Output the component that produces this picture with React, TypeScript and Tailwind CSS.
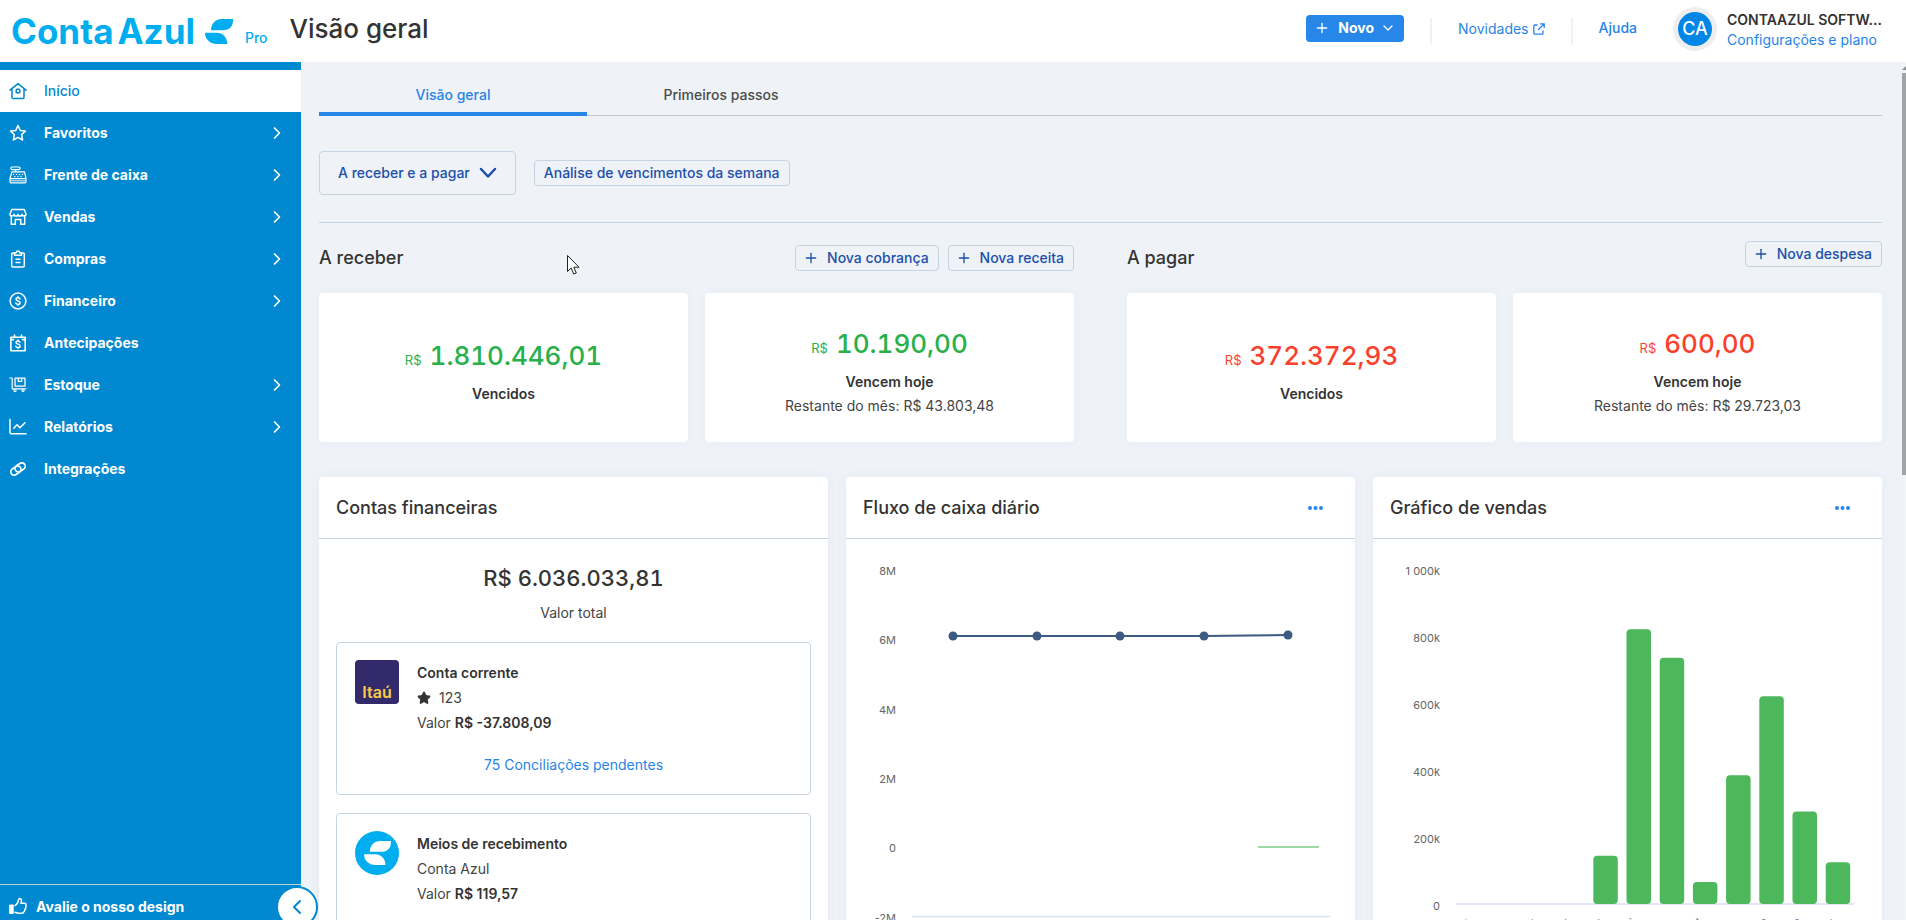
import React, { useState } from 'react';
import { ChevronDown, ChevronLeft, ChevronRight, Plus, Star } from 'lucide-react';

const Svg: React.FC<{ children: React.ReactNode; className?: string }> = ({ children, className = 'size-[18px]' }) => (
  <svg viewBox="0 0 18 18" fill="none" stroke="currentColor" strokeWidth="1.5" strokeLinecap="round" strokeLinejoin="round" className={className} aria-hidden="true">
    {children}
  </svg>
);

const HomeIcon: React.FC = () => (
  <Svg>
    <path d="M1 8.2 9 1.6l8 6.6M3 7v8.4c0 .6.4 1 1 1h10c.6 0 1-.4 1-1V7" />
    <rect x="7.2" y="7.2" width="3.6" height="3.6" rx="0.8" />
  </Svg>
);

const StarIcon: React.FC = () => (
  <Svg>
    <path d="m9 1.5 2.2 4.9 5.3.6-3.9 3.6 1 5.4L9 13.3 4.4 16l1-5.4L1.5 7l5.3-.6z" />
  </Svg>
);

const RegisterIcon: React.FC = () => (
  <Svg>
    <rect x="2" y="1" width="9" height="2.6" rx="1" strokeWidth="1.2" />
    <path d="M6.5 3.8v2" strokeWidth="1.2" />
    <path d="M3 5.8h12.5l1.5 6.5v3.5c0 .6-.4 1-1 1H2c-.6 0-1-.4-1-1v-3.5zM1.2 12.6h15.6" strokeWidth="1.2" />
    <path d="M2 14.8h14" strokeWidth="1.4" opacity="0.6" />
    <path d="M4.500 8.400h.1M7.500 8.400h.1M10.500 8.400h.1M13.500 8.400h.1M5.800 10.500h.1M8.900 10.500h.1M12 10.500h.1" strokeWidth="1.3" />
  </Svg>
);

const StoreIcon: React.FC = () => (
  <Svg>
    <path d="M2.8 1.5h12.4L17 6c0 1.100-.8 1.900-2 1.900S13 7 13 6.200C13 7.100 12.200 8 11 8S9 7.100 9 6.200C9 7.100 8.200 8 7 8S5 7.100 5 6.200C5 7 4.200 7.900 3 7.900S1 7.100 1 6z" />
    <path d="M2.3 8v8.3h4v-4.8h5.4v4.8h4V8" />
  </Svg>
);

const ClipboardIcon: React.FC = () => (
  <Svg>
    <path d="M5.5 3H4c-.8 0-1.300.5-1.300 1.300v11.400c0 .8.5 1.300 1.300 1.300h10c.8 0 1.300-.5 1.300-1.300V4.300c0-.8-.5-1.300-1.300-1.300h-1.500" />
    <path d="M5.5 2.8h1.8C7.400 1.700 8 1 9 1s1.600.7 1.700 1.800h1.800v2.400h-7zM7 9.300h4M7 12.500h4" />
  </Svg>
);

const Dollar: React.FC = () => (
  <path d="M11 7c-.3-.8-1-1.200-2-1.200-1.200 0-2 .5-2 1.500 0 2.200 4.200 1.200 4.200 3.400 0 1-.9 1.600-2.200 1.600-1.100 0-1.900-.5-2.200-1.300M9 4.700v1M9 12.300v1" strokeWidth="1.4" />
);

const FinanceIcon: React.FC = () => (
  <Svg>
    <circle cx="9" cy="9" r="7.9" />
    <Dollar />
  </Svg>
);

const AnticipateIcon: React.FC = () => (
  <Svg>
    <path d="M4.5 5.6H1.900V3.200h14.300v2.400h-2.700M1.900 5v11.800h14.300V5M5.500 1v2.500M12.500 1v2.500" strokeWidth="1.6" />
    <g transform="translate(0 1.2)"><Dollar /></g>
  </Svg>
);

const StockIcon: React.FC = () => (
  <Svg>
    <path d="M.8 2h2.400v10.800h13.600" strokeWidth="1.2" />
    <path d="M6 2.200h10v7.900H6zM9.300 2.200v3.200h3.400V2.200" strokeWidth="1.3" />
    <circle cx="6" cy="14.6" r="1.1" strokeWidth="1.1" />
    <circle cx="14" cy="14.6" r="1.1" strokeWidth="1.1" />
  </Svg>
);

const ReportIcon: React.FC = () => (
  <Svg>
    <path d="M1 1.500v13c0 .8.5 1.300 1.300 1.300H17" />
    <path d="m4.800 10.300 3.200-3.500 3 3 5-5" />
  </Svg>
);

const LinkIcon: React.FC = () => (
  <Svg>
    <g transform="rotate(-35 9 9)" strokeWidth="1.7">
      <path d="M10.800 11.500a3.400 3.400 0 0 1-2.400 1H4.300a3.400 3.400 0 0 1 0-6.800h4.100a3.400 3.400 0 0 1 3 5" />
      <path d="M7.200 6.500a3.400 3.400 0 0 1 2.400-1h4.100a3.400 3.400 0 0 1 0 6.800H9.600a3.400 3.400 0 0 1-3-5" />
    </g>
  </Svg>
);

const ThumbIcon: React.FC = () => (
  <Svg>
    <path d="M1 8h3.200v8.500H1z" fill="currentColor" strokeWidth="1" />
    <path d="M6 8.500c2-1 3-2.600 3.300-4.800C9.500 2 10 1.500 10.800 1.500c1.500 0 2 1.500 1.200 4.700h3.400c1.400 0 1.900 1 1.400 2.100.4.800.3 1.700-.3 2.300.3.900 0 1.700-.7 2.100.1 1-.3 1.700-1 2-.1 1-.7 1.500-1.800 1.500H9.500c-1.300 0-2.300-.6-3.500-1" />
  </Svg>
);

const Leaf: React.FC<{ className?: string }> = ({ className }) => (
  <svg viewBox="0 0 28 25" fill="currentColor" className={className} aria-hidden="true">
    <path d="M28 0v1.500C28 7.500 24 11.300 18 11.300H6C6 4.600 10.500 0 17 0z" />
    <path d="M0 13.800h11.500c6.200 0 10.700 4.500 10.700 11.200H12C5 25 0 20.500 0 13.800z" />
  </svg>
);

const MENU = [
  { label: 'Início', icon: HomeIcon, active: true, sub: false },
  { label: 'Favoritos', icon: StarIcon, active: false, sub: true },
  { label: 'Frente de caixa', icon: RegisterIcon, active: false, sub: true },
  { label: 'Vendas', icon: StoreIcon, active: false, sub: true },
  { label: 'Compras', icon: ClipboardIcon, active: false, sub: true },
  { label: 'Financeiro', icon: FinanceIcon, active: false, sub: true },
  { label: 'Antecipações', icon: AnticipateIcon, active: false, sub: false },
  { label: 'Estoque', icon: StockIcon, active: false, sub: true },
  { label: 'Relatórios', icon: ReportIcon, active: false, sub: true },
  { label: 'Integrações', icon: LinkIcon, active: false, sub: false },
];

const Header: React.FC = () => (
  <header className="flex h-[62px] shrink-0 items-center bg-white pl-[11px] pr-6">
    <a href="#" className="flex items-center text-[#00aef0]">
      <span className="flex gap-1 text-[35px] font-bold leading-10">
        <span>Conta</span>
        <span>Azul</span>
      </span>
      <Leaf className="ml-[10px] h-[25px] w-[28px]" />
      <span className="ml-3 pt-3.5 text-sm font-medium">Pro</span>
    </a>
    <h1 className="ml-[22px] -mt-1 text-[26px] font-medium leading-8 text-[#333]">Visão geral</h1>

    <div className="ml-auto flex items-center text-sm">
      <button className="-mt-1.5 flex h-[27px] items-center rounded bg-[#2787e9] px-2 font-bold text-white">
        <Plus className="size-4" />
        <span className="ml-2">Novo</span>
        <ChevronDown className="ml-1.5 size-4" />
      </button>
      <span className="mx-[26px] h-[26px] w-0.5 bg-[#eef1f7]" />
      <a href="#" className="-mt-1 flex items-center gap-1 text-[#2784e8]">
        Novidades
        <svg viewBox="0 0 12 12" fill="none" stroke="currentColor" strokeWidth="1.3" className="size-3" aria-hidden="true">
          <path d="M4.500 2H1.800c-.6 0-1 .4-1 1v7.200c0 .6.4 1 1 1H9c.6 0 1-.4 1-1V7.500M7 .8h4.200V5M11 1 5 7" />
        </svg>
      </a>
      <span className="mx-[26px] h-[26px] w-0.5 bg-[#eef1f7]" />
      <a href="#" className="-mt-1.5 font-medium text-[#2784e8]">Ajuda</a>
      <span className="-mt-1 ml-9 mr-2.5 flex size-11 items-center justify-center rounded-full bg-[#eee]">
        <span className="flex size-[34px] items-center justify-center rounded-full bg-[#0086e6] text-lg font-medium text-white">CA</span>
      </span>
      <div className="-mt-0.5 w-[155px] whitespace-nowrap leading-5">
        <p className="font-semibold text-[#333]">CONTAAZUL SOFTW...</p>
        <a href="#" className="text-[#2784e8]">Configurações e plano</a>
      </div>
    </div>
  </header>
);

const Sidebar: React.FC = () => (
  <aside className="relative z-10 flex w-[301px] shrink-0 flex-col bg-[#0088d1] pt-2 text-sm">
    <nav>
      {MENU.map(({ label, icon: Icon, active, sub }) => (
        <a
          key={label}
          href="#"
          className={`flex h-[42px] items-center pl-[9px] pr-[14px] ${active ? 'bg-white font-medium text-[#0088d1]' : 'font-bold text-white'}`}
        >
          <Icon />
          <span className="ml-[17px]">{label}</span>
          {sub && <ChevronRight className="ml-auto size-5" />}
        </a>
      ))}
    </nav>
    <a href="#" className="mt-auto flex h-9 gap-[9px] border-t border-[#bcd0dc] pl-[9px] pt-3 font-bold leading-5 text-white">
      <ThumbIcon />
      Avalie o nosso design
    </a>
    <button aria-label="Recolher menu" className="absolute -bottom-2 -right-[17px] flex size-[42px] items-center justify-center rounded-full border-2 border-[#0088d1] bg-white text-[#0088d1]">
      <ChevronLeft className="size-6" />
    </button>
  </aside>
);

const OutlineButton: React.FC<{ children: React.ReactNode; plus?: boolean }> = ({ children, plus }) => (
  <button className="flex h-[26px] items-center rounded border border-[#c5d3e2] px-[9px] text-sm font-medium text-[#1c4fab]">
    {plus && <Plus className="-ml-0.5 mr-2 size-4" />}
    {children}
  </button>
);

const AmountCard: React.FC<{ value: string; label: string; rest?: string; color: string }> = ({ value, label, rest, color }) => (
  <div className="flex h-[149px] flex-1 flex-col items-center justify-center rounded bg-white pt-2 text-sm shadow-[0_0_12px_rgba(60,80,120,0.04)]">
    <p className={`flex items-baseline gap-2 font-medium ${color}`}>
      <span className="text-[13px] font-normal">R$</span>
      <span className="text-[26px] leading-9 tabular-nums">{value}</span>
    </p>
    <p className="mt-2 font-semibold leading-6 text-[#333]">{label}</p>
    {rest && <p className="leading-6 text-[#444]">Restante do mês: {rest}</p>}
  </div>
);

const Panel: React.FC<{ title: string; menu?: boolean; children: React.ReactNode }> = ({ title, menu, children }) => (
  <section className="flex-1 rounded bg-white shadow-[0_0_12px_rgba(60,80,120,0.05)]">
    <div className="flex h-[62px] items-center justify-between border-b border-[#c5d3e2] px-[17px]">
      <h2 className="text-lg font-medium text-[#333]">{title}</h2>
      {menu && (
        <button aria-label="Mais opções" className="mr-[15px]">
          <svg viewBox="0 0 15 4" className="h-1 w-[15px] fill-[#2488f0]" aria-hidden="true">
            <circle cx="2" cy="2" r="2" />
            <circle cx="7.5" cy="2" r="2" />
            <circle cx="13" cy="2" r="2" />
          </svg>
        </button>
      )}
    </div>
    {children}
  </section>
);

const CASH_POINTS = [
  [107, 97], [191, 97], [274, 97], [358, 97], [442, 96],
];

const CashFlowChart: React.FC = () => (
  <svg viewBox="0 0 509 420" className="w-full" role="img" aria-label="Fluxo de caixa diário">
    {['8M', '6M', '4M', '2M', '0', '-2M'].map((t, i) => (
      <text key={t} x="50" y={36 + Math.round(i * 69.3)} textAnchor="end" className="fill-[#666] text-[11px]">{t}</text>
    ))}
    <path d="M66 377.5h418" stroke="#d9e2f3" strokeWidth="1.5" />
    <path d="M412 308h61" stroke="#7dcb87" strokeWidth="1.5" />
    <polyline points={CASH_POINTS.map((p) => p.join(',')).join(' ')} fill="none" stroke="#3d5a80" strokeWidth="2" />
    {CASH_POINTS.map(([x, y]) => <circle key={x} cx={x} cy={y} r="4.5" fill="#3d5a80" />)}
  </svg>
);

const SALES = [
  { month: 'Dez', value: 0 },
  { month: 'Jan', value: 0 },
  { month: 'Fev', value: 0 },
  { month: 'Mar', value: 0 },
  { month: 'Abr', value: 144 },
  { month: 'Mai', value: 820 },
  { month: 'Jun', value: 735 },
  { month: 'Jul', value: 66 },
  { month: 'Ago', value: 384 },
  { month: 'Set', value: 620 },
  { month: 'Out', value: 276 },
  { month: 'Nov', value: 125 },
];

const SalesChart: React.FC = () => (
  <svg viewBox="0 0 509 420" className="w-full" role="img" aria-label="Gráfico de vendas">
    {['1 000k', '800k', '600k', '400k', '200k', '0'].map((t, i) => (
      <text key={t} x="67" y={36 + i * 67} textAnchor="end" className="fill-[#666] text-[11px]">{t}</text>
    ))}
    <path d="M83 365h398" stroke="#e0e7f2" strokeWidth="2" />
    {SALES.map(({ month, value }, i) => {
      const x = 87.5 + i * 33.2;
      const h = value * 0.335;
      return (
        <g key={month}>
          {value > 0 && <rect x={x} y={365 - h} width="24.5" height={h} rx="4" fill="#4cb85b" />}
          <text transform={`translate(${x + 10} 384) rotate(-45)`} textAnchor="end" className="fill-[#666] text-[11px]">{month}</text>
        </g>
      );
    })}
  </svg>
);

const App: React.FC = () => {
  const [tab, setTab] = useState('Visão geral');

  return (
    <div className="relative flex h-screen flex-col overflow-hidden bg-[#eff3f8] font-['Inter',sans-serif]">
      <Header />
      <div className="flex min-h-0 flex-1">
        <Sidebar />

        <main className="min-w-0 flex-1 overflow-hidden pl-[18px] pr-6">
          <div role="tablist" className="flex h-[54px] border-b border-[#bfc7d1] text-sm font-medium">
            {['Visão geral', 'Primeiros passos'].map((t) => (
              <button
                key={t}
                role="tab"
                aria-selected={tab === t}
                onClick={() => setTab(t)}
                className={`h-[54px] w-[268px] border-b-4 pt-4 ${tab === t ? 'border-[#2787e9] text-[#2784e8]' : 'border-transparent text-[#4a4a4a]'}`}
              >
                {t}
              </button>
            ))}
          </div>

          <div className="mt-[35px] flex items-center gap-[18px] border-b border-[#c5d3e2] pb-[27px]">
            <button className="flex h-11 items-center gap-[9px] rounded border border-[#c5d3e2] px-[18px] text-sm font-medium text-[#1c4fab]">
              A receber e a pagar
              <svg viewBox="0 0 18 12" fill="none" stroke="currentColor" strokeWidth="2.5" strokeLinecap="round" strokeLinejoin="round" className="h-3 w-[18px]" aria-hidden="true">
                <path d="m2 2 7 7.500L16 2" />
              </svg>
            </button>
            <OutlineButton>Análise de vencimentos da semana</OutlineButton>
          </div>

          <div className="flex gap-[53px] pt-[18px]">
            <section className="flex-1">
              <div className="flex h-[34px] items-center gap-[9px]">
                <h2 className="mr-auto text-lg font-medium text-[#333]">A receber</h2>
                <OutlineButton plus>Nova cobrança</OutlineButton>
                <OutlineButton plus>Nova receita</OutlineButton>
              </div>
              <div className="mt-[18px] flex gap-[17px]">
                <AmountCard value="1.810.446,01" label="Vencidos" color="text-[#28b04b]" />
                <AmountCard value="10.190,00" label="Vencem hoje" rest="R$ 43.803,48" color="text-[#28b04b]" />
              </div>
            </section>
            <section className="flex-1">
              <div className="flex h-[34px] items-start justify-between">
                <h2 className="self-center text-lg font-medium text-[#333]">A pagar</h2>
                <OutlineButton plus>Nova despesa</OutlineButton>
              </div>
              <div className="mt-[18px] flex gap-[17px]">
                <AmountCard value="372.372,93" label="Vencidos" color="text-[#fb3f2d]" />
                <AmountCard value="600,00" label="Vencem hoje" rest="R$ 29.723,03" color="text-[#fb3f2d]" />
              </div>
            </section>
          </div>

          <div className="mt-[35px] flex items-start gap-[18px]">
            <Panel title="Contas financeiras">
              <div className="px-[17px] pb-[17px] pt-[23px] text-center text-sm leading-[25px] text-[#444]">
                <p className="text-[22px] font-medium leading-8 text-[#333] tabular-nums">R$ 6.036.033,81</p>
                <p className="mt-[6px]">Valor total</p>
                <article className="mt-[17px] rounded border border-[#c5d3e2] px-[18px] py-[17px]">
                  <div className="flex gap-[18px] text-left">
                    <span className="flex size-11 items-end justify-center rounded-sm bg-[#322a6b] text-base font-semibold leading-6 text-[#fbcb45]">Itaú</span>
                    <div>
                      <p className="font-semibold text-[#333]">Conta corrente</p>
                      <p className="flex items-center gap-2">
                        <Star className="size-3.5 fill-[#333] text-[#333]" />
                        123
                      </p>
                      <p>Valor <b className="font-semibold text-[#333]">R$ -37.808,09</b></p>
                    </div>
                  </div>
                  <a href="#" className="mt-[17px] block text-[#2784e8]">75 Conciliações pendentes</a>
                </article>
                <article className="mt-[18px] flex gap-[18px] rounded border border-[#c5d3e2] px-[18px] pb-[60px] pt-[17px] text-left">
                  <span className="flex size-11 items-center justify-center rounded-full bg-[#00aef0] text-white">
                    <Leaf className="h-6 w-[27px]" />
                  </span>
                  <div>
                    <p className="font-semibold text-[#333]">Meios de recebimento</p>
                    <p>Conta Azul</p>
                    <p>Valor <b className="font-semibold text-[#333]">R$ 119,57</b></p>
                  </div>
                </article>
              </div>
            </Panel>
            <Panel title="Fluxo de caixa diário" menu>
              <CashFlowChart />
            </Panel>
            <Panel title="Gráfico de vendas" menu>
              <SalesChart />
            </Panel>
          </div>
        </main>
      </div>

      {/* scroll track */}
      <div className="absolute right-0 top-[62px] h-full w-1 bg-[#f1f3f6]">
        <svg viewBox="0 0 4 4" className="mt-1 size-1 fill-[#8a8c8f]" aria-hidden="true"><path d="M0 4 4 0v4z" /></svg>
        <div className="mt-[3px] h-[402px] bg-[#a1a3a6]" />
      </div>

      {/* mouse pointer */}
      <svg viewBox="0 0 13 20" className="absolute left-[567px] top-[255px] h-5 w-[13px]" aria-hidden="true">
        <path d="M.5.500v16l3.700-3.500 2.500 6 2.600-1-2.500-5.800H12z" fill="#fff" stroke="#222" />
      </svg>
    </div>
  );
};

export default App;
